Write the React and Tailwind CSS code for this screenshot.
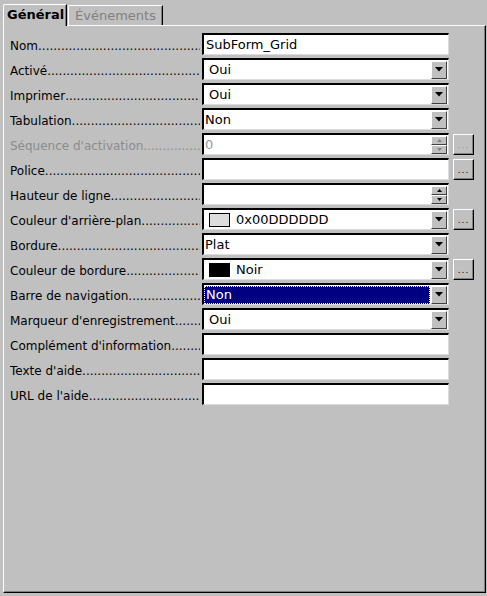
import React from "react";

const ROWS = [
    { label: "Nom", type: "text", value: "SubForm_Grid" },
    { label: "Activé", type: "list", value: "Oui" },
    { label: "Imprimer", type: "list", value: "Oui" },
    { label: "Tabulation", type: "combo", value: "Non" },
    { label: "Séquence d'activation", type: "spin", value: "0", disabled: true, more: true },
    { label: "Police", type: "text", value: "", more: true },
    { label: "Hauteur de ligne", type: "spin", value: "" },
    { label: "Couleur d'arrière-plan", type: "list", value: "0x00DDDDDD", swatch: "bg-[#dddddd]", more: true },
    { label: "Bordure", type: "combo", value: "Plat" },
    { label: "Couleur de bordure", type: "list", value: "Noir", swatch: "bg-black", more: true },
    { label: "Barre de navigation", type: "combo", value: "Non", selected: true },
    { label: "Marqueur d'enregistrement", type: "list", value: "Oui" },
    { label: "Complément d'information", type: "text", value: "" },
    { label: "Texte d'aide", type: "text", value: "" },
    { label: "URL de l'aide", type: "text", value: "" },
];

const DOTS = ".".repeat(90);

function DropButton() {
    return (
        <div className="w-[16px] h-[18px] shrink-0 bg-[#c0c0c0] border-t border-l border-t-white border-l-white border-r border-b border-r-[#404040] border-b-[#404040] flex items-center justify-center">
            <svg width="8" height="5" viewBox="0 0 8 5">
                <path d="M0 0 H8 L4 4.5 Z" fill="#000" />
            </svg>
        </div>
    );
}

function SpinButtons({ disabled }) {
    const fill = disabled ? "#808080" : "#000";
    return (
        <div className="w-[16px] h-[18px] shrink-0 flex flex-col">
            <div className="h-[9px] bg-[#c0c0c0] border-t border-l border-t-white border-l-white border-r border-b border-r-[#404040] border-b-[#404040] flex items-center justify-center">
                <svg width="5" height="3" viewBox="0 0 5 3">
                    <path d="M0 3 H5 L2.5 0 Z" fill={fill} />
                </svg>
            </div>
            <div className="h-[9px] bg-[#c0c0c0] border-t border-l border-t-white border-l-white border-r border-b border-r-[#404040] border-b-[#404040] flex items-center justify-center">
                <svg width="5" height="3" viewBox="0 0 5 3">
                    <path d="M0 0 H5 L2.5 3 Z" fill={fill} />
                </svg>
            </div>
        </div>
    );
}

function MoreButton({ disabled }) {
    return (
        <div className="w-[21px] h-[21px] shrink-0 bg-[#c0c0c0] border-t border-l border-t-white border-l-white border-r border-b border-r-black border-b-black shadow-[inset_-1px_-1px_0_#808080] flex items-end justify-center pb-[4px]">
            <span className={`text-[9px] leading-[9px] tracking-[1px] ${disabled ? "text-[#9a9a9a]" : "text-black"}`}>...</span>
        </div>
    );
}

function Field({ row }) {
    const { type, value, swatch, selected, disabled } = row;
    return (
        <div className="w-[247px] h-[22px] shrink-0 bg-white border-t-2 border-l-2 border-t-black border-l-black border-r border-b border-r-[#dcdcdc] border-b-[#dcdcdc] flex items-center pr-[1px]">
            <div className="flex-1 h-full flex items-center min-w-0">
                {selected ? (
                    <div className="h-[18px] flex-1 mr-[1px] bg-[#000080] text-white border border-dotted border-white flex items-center pl-[1px] text-[13px] leading-[16px]">
                        {value}
                    </div>
                ) : (
                    <div
                        className={`flex items-center text-[13px] leading-[16px] whitespace-nowrap ${disabled ? "text-[#9a9a9a]" : "text-black"} ${
                            type === "list" ? "pl-[5px]" : type === "text" ? "pl-[2px]" : "pl-[1px]"
                        }`}
                    >
                        {swatch && <span className={`inline-block w-[21px] h-[14px] border border-black mr-[6px] ${swatch}`} />}
                        {value}
                    </div>
                )}
            </div>
            {(type === "list" || type === "combo") && <DropButton />}
            {type === "spin" && <SpinButtons disabled={disabled} />}
        </div>
    );
}

function Row({ row }) {
    return (
        <div className="flex items-center h-[22px]">
            <div
                className={`w-[190px] mr-[2px] pt-[4px] flex overflow-hidden whitespace-nowrap text-[12px] leading-[14px] ${
                    row.disabled ? "text-[#8c8c8c]" : "text-black"
                }`}
            >
                <span className="shrink-0">{row.label}</span>
                <span className="overflow-hidden">{DOTS}</span>
            </div>
            <Field row={row} />
            {row.more && (
                <div className="ml-[4px]">
                    <MoreButton disabled={row.disabled} />
                </div>
            )}
        </div>
    );
}

export default function App() {
    return (
        <div
            className="w-[487px] h-[596px] bg-[#c0c0c0] overflow-hidden"
            style={{ fontFamily: '"DejaVu Sans", Verdana, sans-serif' }}
        >
            {/* tabs */}
            <div className="flex items-end h-[25px] pl-[3px]">
                <div className="relative z-10 h-[22px] mb-[-1px] w-[64px] bg-[#c0c0c0] border-t border-l border-t-white border-l-white rounded-tl-[2px] border-r border-r-black shadow-[inset_-1px_0_0_#808080] flex items-center pl-[3px] pb-[1px] text-[13px] font-bold text-black">
                    Général
                </div>
                <div className="h-[20px] ml-[1px] w-[95px] border-t border-l border-t-white border-l-white rounded-tl-[2px] border-r border-r-black shadow-[inset_-1px_0_0_#808080] flex items-center pl-[6px] text-[13px] text-[#808080]">
                    Événements
                </div>
            </div>

            {/* panel */}
            <div className="ml-[3px] w-[483px] h-[568px] border-t border-l border-t-white border-l-white border-r border-b border-r-black border-b-black shadow-[inset_-1px_-1px_0_#808080] pt-[7px] pl-[6px]">
                <div className="flex flex-col gap-[3px]">
                    {ROWS.map((row) => (
                        <Row key={row.label} row={row} />
                    ))}
                </div>
            </div>
        </div>
    );
}
